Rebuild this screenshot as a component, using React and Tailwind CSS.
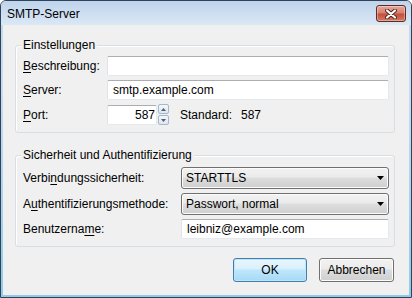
import React from 'react';

function TextBox({ children, className = '' }) {
  return (
    <div className={`h-[20px] bg-white border border-[#e3e9ef] border-t-[#abadb3] border-l-[#e2e3ea] rounded-[2px] flex items-center px-[5px] ${className}`}>
      {children}
    </div>
  );
}

function Arrow() {
  return (
    <svg width="7" height="4" viewBox="0 0 7 4" className="ml-auto mr-[4px]">
      <path d="M0 0h7L3.5 4z" fill="#000" />
    </svg>
  );
}

function Combo({ children }) {
  return (
    <div className="h-[22px] flex-1 flex items-center pl-[4px] border border-[#707070] rounded-[3px] bg-[linear-gradient(#f2f2f2_0%,#ebebeb_45%,#dddddd_50%,#cfcfcf_100%)] shadow-[inset_0_0_0_1px_#fcfcfc]">
      <span>{children}</span>
      <Arrow />
    </div>
  );
}

function Group({ title, className = '', children }) {
  return (
    <div className={`relative border border-[#d5dfe5] rounded-[3px] shadow-[inset_1px_1px_0_#fff] ${className}`}>
      <span className="absolute -top-[9px] left-[5px] px-[2px] leading-[16px] bg-[#f0f0f0]">{title}</span>
      {children}
    </div>
  );
}

function Row({ label, children, w = 'w-[84px]' }) {
  return (
    <div className="flex items-center">
      <span className={`${w} shrink-0`}>{label}</span>
      {children}
    </div>
  );
}

export default function App() {
  return (
    <div className="w-[412px] h-[298px] flex flex-col border border-[#2f4359] rounded-t-[6px] bg-[linear-gradient(#c4d8ee_0%,#c9dcf1_30%,#8fcbe9_100%)] text-[12px] text-black font-['Liberation_Sans',Arial,sans-serif] overflow-hidden">
      {/* Title bar */}
      <div className="h-[24px] shrink-0 flex bg-[linear-gradient(#bfd4ec,#dbe8f5)]">
        <span className="pl-[6px] pt-[5px] leading-[16px]">SMTP-Server</span>
        <div className="ml-auto mr-[5px] mt-[4px] w-[30px] h-[17px] flex items-center justify-center rounded-[3px] border border-[#5e2b28] bg-[linear-gradient(#e9a99b_0%,#d7806f_45%,#c4503c_55%,#d37a62_100%)] shadow-[inset_0_0_0_1px_rgba(255,255,255,0.35)]">
          <svg width="12" height="10" viewBox="0 0 12 10">
            <path d="M2 1.5l8 7M10 1.5l-8 7" stroke="#4a2420" strokeWidth="4" strokeLinecap="round" />
            <path d="M2 1.5l8 7M10 1.5l-8 7" stroke="#fff" strokeWidth="2.2" strokeLinecap="round" />
          </svg>
        </div>
      </div>

      {/* Client area */}
      <div className="flex-1 mx-[2px] mb-[2px] bg-[#f0f0f0] pl-[12px] pr-[14px] pt-[20px] flex flex-col">
        <Group title="Einstellungen" className="h-[88px] pt-[10px] pl-[7px] pr-[5px] flex flex-col gap-[4px]">
          <Row label={<><u className="underline-offset-[2px]">B</u>eschreibung:</>}>
            <TextBox className="flex-1" />
          </Row>
          <Row label={<><u className="underline-offset-[2px]">S</u>erver:</>}>
            <TextBox className="flex-1">smtp.example.com</TextBox>
          </Row>
          <Row label={<><u className="underline-offset-[2px]">P</u>ort:</>}>
            <TextBox className="w-[50px] justify-end !px-[1px]">587</TextBox>
            <div className="ml-[1px] w-[11px] h-[21px] flex flex-col gap-[1px]">
              <div className="flex-1 flex items-center justify-center border border-[#a6b8cc] rounded-[2px] bg-[linear-gradient(#f4f7fb,#dfe6ef)]">
                <svg width="5" height="3" viewBox="0 0 5 3"><path d="M0 3h5L2.5 0z" fill="#4c607a" /></svg>
              </div>
              <div className="flex-1 flex items-center justify-center border border-[#a6b8cc] rounded-[2px] bg-[linear-gradient(#f4f7fb,#dfe6ef)]">
                <svg width="5" height="3" viewBox="0 0 5 3"><path d="M0 0h5L2.5 3z" fill="#4c607a" /></svg>
              </div>
            </div>
            <span className="ml-[11px] w-[61px]">Standard:</span>
            <span>587</span>
          </Row>
        </Group>

        <Group title="Sicherheit und Authentifizierung" className="mt-[22px] h-[92px] pt-[11px] pl-[7px] pr-[5px] flex flex-col gap-[4px]">
          <Row w="w-[158px]" label={<>Verbi<u className="underline-offset-[2px]">n</u>dungssicherheit:</>}>
            <Combo>STARTTLS</Combo>
          </Row>
          <Row w="w-[158px]" label={<>A<u className="underline-offset-[2px]">u</u>thentifizierungsmethode:</>}>
            <Combo>Passwort, normal</Combo>
          </Row>
          <Row w="w-[158px]" label={<>Benutzerna<u className="underline-offset-[2px]">m</u>e:</>}>
            <TextBox className="flex-1">leibniz@example.com</TextBox>
          </Row>
        </Group>

        <div className="mt-[11px] flex justify-end gap-[12px] pr-[1px]">
          <button className="w-[74px] h-[24px] rounded-[3px] border border-[#3c7fb1] bg-[linear-gradient(#eaf6fd_0%,#d9f0fc_45%,#bee6fd_50%,#a7d9f5_100%)] shadow-[inset_0_0_0_1px_#c3e4f7]">
            OK
          </button>
          <button className="w-[75px] h-[24px] rounded-[3px] border border-[#707070] bg-[linear-gradient(#f2f2f2_0%,#ebebeb_45%,#dddddd_50%,#cfcfcf_100%)] shadow-[inset_0_0_0_1px_#fcfcfc]">
            Abbrechen
          </button>
        </div>
      </div>
    </div>
  );
}
